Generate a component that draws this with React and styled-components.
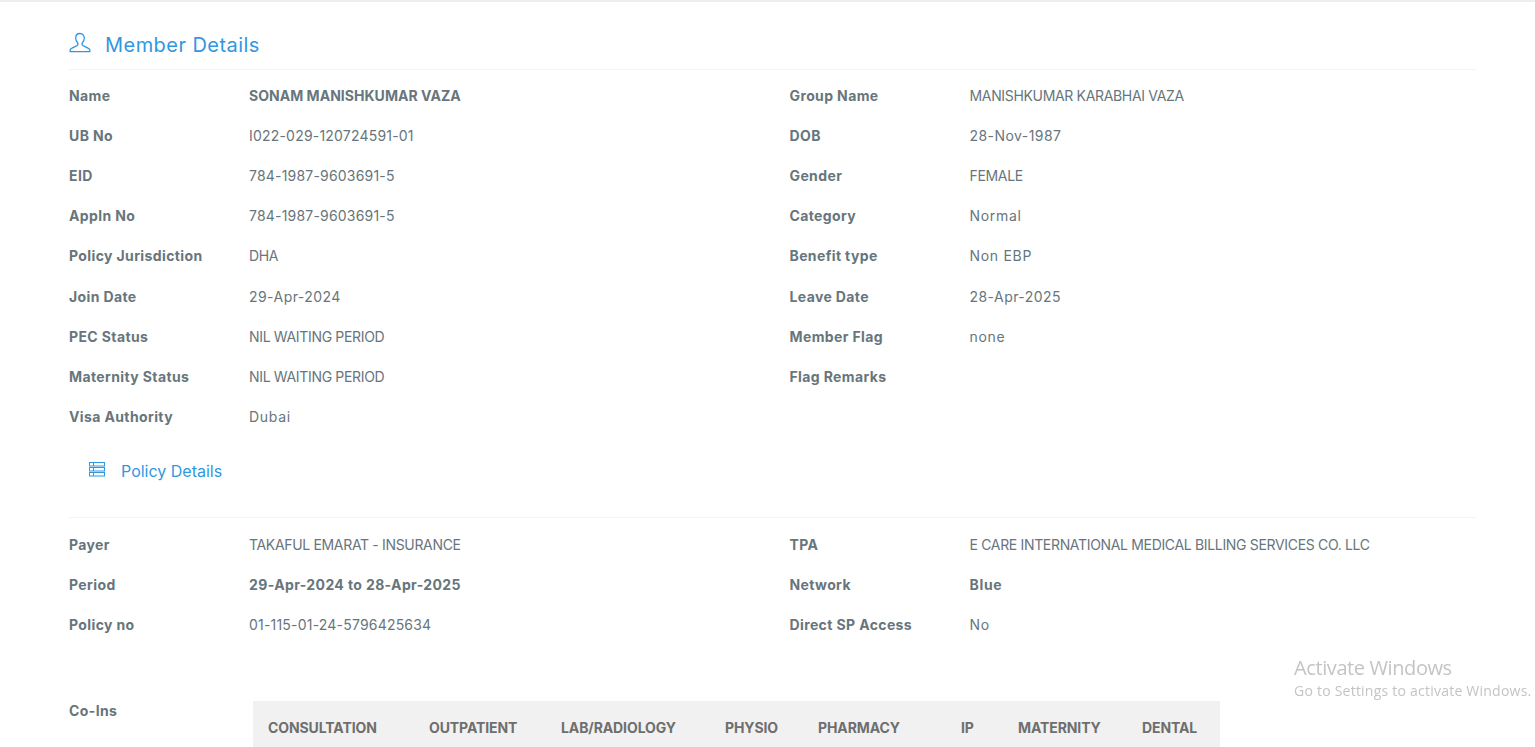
import React from 'react'
import styled, { createGlobalStyle } from 'styled-components'

const GlobalStyle = createGlobalStyle`
html, body {
    margin: 0;
    padding: 0;
    height: 747px;
    overflow: hidden;
    background: #fff;
}
body {
    font-family: "Inter", "Noto Sans", sans-serif;
    font-size: 14px;
    color: #67757c;
}
`

const Page = styled.div`
    border-top: 2px solid #eeeeee;
    padding: 0 59px 0 69px;
    height: 747px;
    overflow: hidden;
    box-sizing: border-box;
`

const MemberHeading = styled.h3`
    display: flex;
    align-items: center;
    gap: 14px;
    margin: 0;
    height: 68px;
    padding-top: 19px;
    box-sizing: border-box;
    border-bottom: 1px solid #f2f4f6;
    font-size: 20px;
    font-weight: 400;
    letter-spacing: 0.45px;
    color: #3098e0;
`

const PolicyHeading = styled.h4`
    display: flex;
    align-items: center;
    gap: 16px;
    margin: 0;
    height: 81px;
    padding: 0 0 12px 20px;
    box-sizing: border-box;
    border-bottom: 1px solid #f2f4f6;
    font-size: 16px;
    font-weight: 400;
    color: #3098e0;
`

const HeadingIcon = styled.svg`
    flex: none;
    margin-top: ${props => props.$lift}px;
    fill: none;
    stroke: #3098e0;
`

const Details = styled.div`
    display: grid;
    grid-template-columns: 720.5px 1fr;
    padding-top: ${props => props.$top}px;
`

const Row = styled.div`
    display: grid;
    grid-template-columns: 180px 1fr;
    align-items: center;
    height: ${props => props.$height}px;
`

const Label = styled.span`
    font-weight: 650;
    font-size: 14px;
    letter-spacing: 0.38px;
    color: #67757c;
`

const Value = styled.span`
    font-weight: ${props => props.$strong ? 700 : 400};
    font-size: 14px;
    letter-spacing: ${props => props.$spacing}px;
    color: #67757c;
`

const CoIns = styled.div`
    display: flex;
    margin-top: 56.5px;
`

const CoInsLabel = styled(Label)`
    width: 184px;
    flex: none;
    padding-top: 1px;
`

const TableHead = styled.div`
    display: grid;
    grid-template-columns: 161px 132px 164px 93px 143px 57px 124px 93px;
    width: 967px;
    height: 60px;
    background: #f1f1f1;
`

const HeadCell = styled.div`
    padding: 18px 0 0 15px;
    font-size: 14px;
    font-weight: 650;
    letter-spacing: -0.1px;
    color: #6e6e6e;
    white-space: nowrap;
`

const Watermark = styled.div`
    position: fixed;
    left: 1294px;
    top: 655px;
    font-family: "Open Sans", sans-serif;
    color: #c4c4c4;
    white-space: nowrap;
`

const WatermarkTitle = styled.div`
    font-size: 20px;
    line-height: 26px;
    letter-spacing: -0.4px;
`

const WatermarkText = styled.div`
    font-size: 14px;
    line-height: 20px;
    letter-spacing: 0.23px;
`

const UserIcon = () => (
    <HeadingIcon width="22" height="22" viewBox="0 0 22 22" strokeWidth="1.3" $lift={-4}>
        <path d="M11 1.5c-2.7 0-4.3 2-4.3 4.6 0 2 .8 3.6 1.9 4.6.5.5.5 2.2-.3 2.8-.9.7-6.2 2.2-7 4.2-.2.6-.2 1.5-.2 2h19.8c0-.5 0-1.4-.2-2-.8-2-6.1-3.5-7-4.2-.8-.6-.8-2.3-.3-2.8 1.1-1 1.9-2.6 1.9-4.6 0-2.6-1.6-4.6-4.3-4.6z" />
    </HeadingIcon>
)

const ListIcon = () => (
    <HeadingIcon width="16" height="15" viewBox="0 0 16 15" strokeWidth="1" $lift={-3}>
        <rect x="0.5" y="0.5" width="15" height="3.5" />
        <rect x="0.5" y="5.5" width="15" height="3.5" />
        <rect x="0.5" y="10.5" width="15" height="3.5" />
        <path d="M4.5 .5v3.5M4.5 5.5v3.5M4.5 10.5v3.5" />
    </HeadingIcon>
)

const memberRows = [
    [["Name", "SONAM MANISHKUMAR VAZA", true], ["Group Name", "MANISHKUMAR KARABHAI VAZA"]],
    [["UB No", "I022-029-120724591-01"], ["DOB", "28-Nov-1987"]],
    [["EID", "784-1987-9603691-5"], ["Gender", "FEMALE"]],
    [["Appln No", "784-1987-9603691-5"], ["Category", "Normal"]],
    [["Policy Jurisdiction", "DHA"], ["Benefit type", "Non EBP"]],
    [["Join Date", "29-Apr-2024"], ["Leave Date", "28-Apr-2025"]],
    [["PEC Status", "NIL WAITING PERIOD"], ["Member Flag", "none"]],
    [["Maternity Status", "NIL WAITING PERIOD"], ["Flag Remarks", ""]],
    [["Visa Authority", "Dubai"], null],
]

const policyRows = [
    [["Payer", "TAKAFUL EMARAT - INSURANCE"], ["TPA", "E CARE INTERNATIONAL MEDICAL BILLING SERVICES CO. LLC"]],
    [["Period", "29-Apr-2024 to 28-Apr-2025", true], ["Network", "Blue", true]],
    [["Policy no", "01-115-01-24-5796425634"], ["Direct SP Access", "No"]],
]

const coInsColumns = ["CONSULTATION", "OUTPATIENT", "LAB/RADIOLOGY", "PHYSIO", "PHARMACY", "IP", "MATERNITY", "DENTAL"]

// the fallback font has narrower digits and wider capitals than the original one
const spacingFor = (text, strong) => {
    if (/^[A-Z .&-]+$/.test(text)) return strong ? 0.03 : -0.33
    if (/^[A-Z0-9-]+$/.test(text)) return 0.2
    if (/\d/.test(text)) return strong ? 0.38 : 0.45
    return 0.7
}

function DetailRows({ rows, top, rowHeight }) {
    return (
        <Details $top={top}>
            {rows.flat().map((item, index) => (
                item ? (
                    <Row key={index} $height={rowHeight}>
                        <Label>{item[0]}</Label>
                        <Value $strong={item[2]} $spacing={spacingFor(item[1], item[2])}>{item[1]}</Value>
                    </Row>
                ) : <span key={index} />
            ))}
        </Details>
    )
}

export default function App() {
    return (
        <Page>
            <GlobalStyle />
            <MemberHeading><UserIcon />Member Details</MemberHeading>
            <DetailRows rows={memberRows} top={5} rowHeight={40.2} />
            <PolicyHeading><ListIcon />Policy Details</PolicyHeading>
            <DetailRows rows={policyRows} top={6.5} rowHeight={40} />
            <CoIns>
                <CoInsLabel>Co-Ins</CoInsLabel>
                <TableHead>
                    {coInsColumns.map(name => <HeadCell key={name}>{name}</HeadCell>)}
                </TableHead>
            </CoIns>
            <Watermark>
                <WatermarkTitle>Activate Windows</WatermarkTitle>
                <WatermarkText>Go to Settings to activate Windows.</WatermarkText>
            </Watermark>
        </Page>
    )
}
